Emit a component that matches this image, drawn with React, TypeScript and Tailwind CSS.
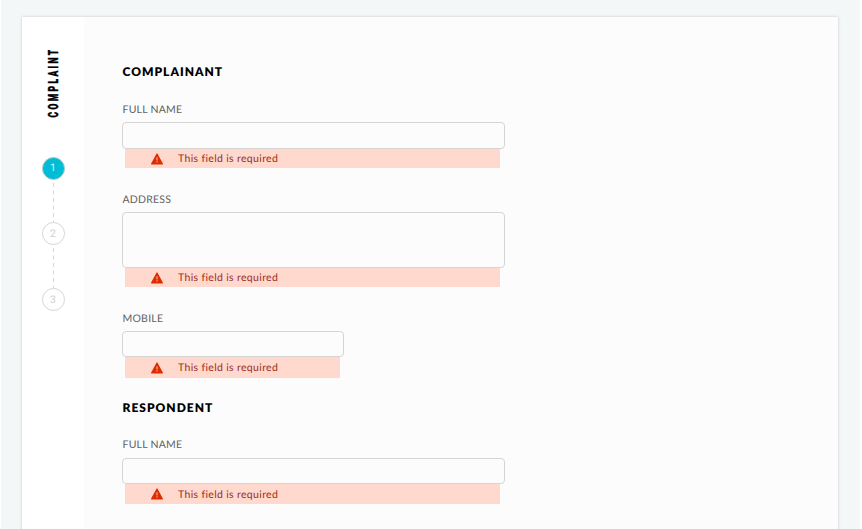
import React from "react";

function WarningIcon() {
  return (
    <svg width="12" height="12" viewBox="0 0 12 12" className="block shrink-0">
      <path d="M6 1 L11.3 10.9 H0.7 Z" fill="#dd2c00" stroke="#dd2c00" strokeWidth="1.2" strokeLinejoin="round" />
      <path d="M6 4.3V7.4" stroke="#ffb3a0" strokeWidth="1.1" />
      <path d="M6 8.3V9.4" stroke="#ffb3a0" strokeWidth="1.1" />
    </svg>
  );
}

type FieldProps = { label: string; className: string; box: string; error: string };

function Field({ label, className, box, error }: FieldProps) {
  return (
    <div className={className}>
      <label className="block h-4 pl-[0.5px] text-[10.5px] leading-[17px] tracking-[0.23px] whitespace-nowrap text-[#626262]">{label}</label>
      <div className={`rounded-[4px] border border-[#d5d5d5] bg-[#fcfcfc] ${box}`} />
      <div className={`ml-[3px] flex items-center bg-[#ffd8ce] pl-[26px] ${error}`}>
        <WarningIcon />
        <span className="ml-[15px] pt-px text-[10.5px] leading-[18px] tracking-[0.34px] whitespace-nowrap text-[#9c2f1b]">
          This field is required
        </span>
      </div>
    </div>
  );
}

function Step({ value, active = false }: { value: number; active?: boolean }) {
  return (
    <div
      className={`flex size-[23px] shrink-0 items-center justify-center rounded-full border pt-px font-['Roboto',sans-serif] text-[10.5px] leading-none ${
        active ? "border-[#a9cdd1] bg-[#00bcd4] text-[#d9f6fa]" : "border-[#d6d6d6] bg-white text-[#cfcfcf]"
      }`}
    >
      {value}
    </div>
  );
}

function Connector({ className }: { className: string }) {
  return (
    <svg width="1" className={`block shrink-0 ${className}`}>
      <line x1="0.5" y1="3" x2="0.5" y2="43" stroke="#d6d6d6" strokeWidth="1" strokeDasharray="4 3.5" />
    </svg>
  );
}

export default function App() {
  return (
    <div className="h-[529px] w-[862px] overflow-hidden bg-white pr-[2px] pl-px font-['Lato',sans-serif] [text-rendering:geometricPrecision]">
      <div className="h-full bg-[#f3f7f8] pt-[17px] pl-[21px]">
        <main className="flex h-[540px] w-[816px] bg-[#fcfcfc] shadow-[0_0_3px_rgba(0,0,0,0.18)]">
          <aside className="flex w-[62px] shrink-0 flex-col items-center bg-white pt-[30px]">
            <div className="flex h-[71px] w-4 items-center justify-center">
              <span className="translate-x-[0.5px] -translate-y-[0.5px] -rotate-90 font-['Roboto',sans-serif] text-[14px] leading-4 font-black tracking-[3.8px] whitespace-nowrap text-black">
                <span className="inline-block scale-x-[0.61] [-webkit-text-stroke:0.4px_black]">COMPLAINT</span>
              </span>
            </div>
            <div className="mt-[38.5px] flex flex-col items-center">
              <Step value={1} active />
              <Connector className="h-[42.5px]" />
              <Step value={2} />
              <Connector className="h-[43px]" />
              <Step value={3} />
            </div>
          </aside>
          <section className="pt-[47px] pl-[38px]">
            <h2 className="h-4 pl-[0.5px] text-[12px] leading-4 font-extrabold tracking-[1px] text-black">COMPLAINANT</h2>
            <Field label="FULL NAME" className="mt-[22px] w-[383px]" box="mt-1 h-[27px]" error="h-[19px] w-[375px]" />
            <Field label="ADDRESS" className="mt-[24px] w-[383px]" box="mt-1 h-[56px]" error="h-[19px] w-[375px]" />
            <Field label="MOBILE" className="mt-[24px] w-[222px]" box="mt-1 h-[26px]" error="h-[21px] w-[215px]" />
            <h2 className="mt-[21px] h-4 pl-[0.5px] text-[12px] leading-[17px] font-extrabold tracking-[1px] text-black">RESPONDENT</h2>
            <Field label="FULL NAME" className="mt-[22px] w-[383px]" box="mt-[5px] h-[26px]" error="h-[20px] w-[375px]" />
          </section>
        </main>
      </div>
    </div>
  );
}
